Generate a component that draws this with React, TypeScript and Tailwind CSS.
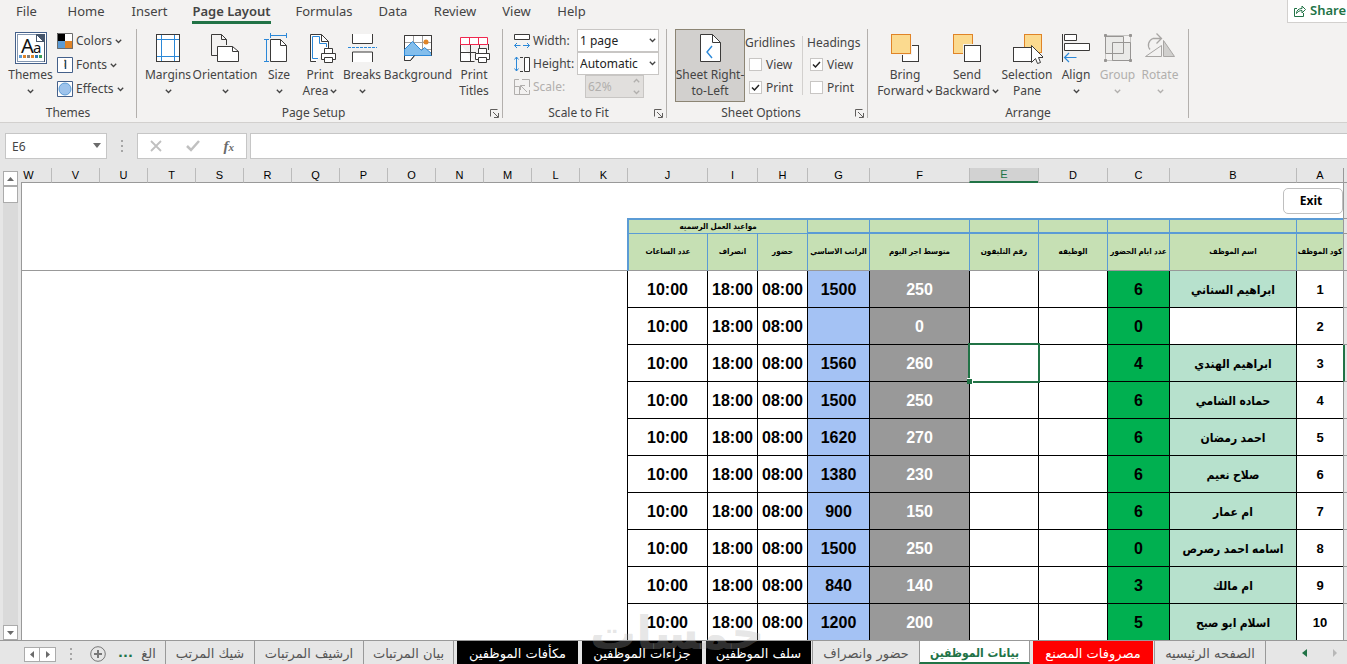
import React from "react";

type Kids = { children?: React.ReactNode };

const INK = "#3b3a39";
const BLUE = "#2b88d8";

function Chevron({ faded = false }: { faded?: boolean }) {
  return (
    <svg width="7" height="5" viewBox="0 0 7 5" fill="none" stroke={faded ? "#b1afad" : "#444"} strokeWidth="1.3" className="shrink-0">
      <path d="M0.8 0.8 3.5 3.5 6.2 0.8" />
    </svg>
  );
}

function Icon({ children, size = 32 }: Kids & { size?: number }) {
  return (
    <svg width={size} height={size} viewBox={`0 0 ${size} ${size}`} fill="none" stroke={INK} strokeWidth="1" className="shrink-0" aria-hidden="true">
      {children}
    </svg>
  );
}

const Printer = ({ x, y }: { x: number; y: number }) => (
  <g transform={`translate(${x} ${y})`} fill="#fff">
    <path d="M3.5 5.500v-5h8v5" />
    <path d="M0.500 5.500h14v6H0.500z" />
    <path d="M3.500 9.500h8v5h-8z" />
  </g>
);

const ThemesIcon = () => (
  <Icon>
    <rect x="0.500" y="0.500" width="31" height="31" fill="#fff" stroke="#44608a" />
    <rect x="2.500" y="2.500" width="27" height="27" stroke="#8497b0" />
    <path d="M21 2h9v28h-1V10h-8z" fill="#44546a" stroke="none" />
    <path d="M21.500 2.500v7h7z" fill="#fff" stroke="#44546a" />
    <text x="6" y="21" fontSize="20" fontFamily="Noto Sans, sans-serif" fill="#111" stroke="none">A</text>
    <text x="18" y="21" fontSize="15" fontFamily="Noto Sans, sans-serif" fill="#111" stroke="none">a</text>
    {["#5b9bd5", "#e08427", "#7f7f7f", "#e08427", "#2e75b6", "#3a9d54"].map((c, i) => (
      <rect key={i} x={4 + i * 4} y="23" width="3" height="3" fill={c} stroke="none" />
    ))}
  </Icon>
);

const MarginsIcon = () => (
  <Icon>
    <rect x="4.500" y="2.500" width="23" height="27" fill="#fff" />
    <path d="M9.500 3v26M22.500 3v26M5 7.500h22M5 24.500h22" stroke={BLUE} />
  </Icon>
);

const OrientationIcon = () => (
  <Icon>
    <path d="M8 23.500H2.500v-21h10l5 5V13M12.500 2.500v5h5" />
    <path d="M8.500 14.500h15l6 5v10h-21z" fill="#fff" />
    <path d="M23.500 14.500v5h6" />
  </Icon>
);

const SizeIcon = () => (
  <Icon>
    <path d="M7.500 3.500h16M7.500 1v5M23.500 1v5M3.500 7.500v22M1 7.500h5M1 29.500h5" stroke={BLUE} />
    <path d="M7.500 7.500h10l6 6v16h-16z" fill="#fff" />
    <path d="M17.500 7.500v6h6" />
  </Icon>
);

const PrintAreaIcon = () => (
  <Icon>
    <path d="M12 29.500H6.500v-27h11l7 7V16" fill="#fff" />
    <path d="M17.500 2.500v7h7" />
    <path d="M14 26.500H8.500v-22h7v7h7V15" stroke={BLUE} />
    <Printer x={17} y={16} />
  </Icon>
);

const BreaksIcon = () => (
  <Icon>
    <path d="M6.500 2v9.500h20V2M6.500 30v-10h20v10" fill="#fff" />
    <path d="M2 15.500h29" stroke={BLUE} strokeDasharray="3 1" />
  </Icon>
);

const BackgroundIcon = () => (
  <Icon>
    <path d="M2.500 3.500h27v20h-17l-4 5h-6z" fill="#fff" />
    <path d="M11.500 4v8M20.500 4v18M3 10.500h26M3 17.500h26" stroke="#a19f9d" />
    <circle cx="24" cy="10" r="2.500" fill="#e08427" stroke="none" />
    <path d="M2.500 23.500v-6l8-8 9 9 3-3 7 6v2z" fill="#83beec" stroke={BLUE} />
    <path d="M2.500 3.500h27v20M2.500 28.500h6l4-5" />
  </Icon>
);

const PrintTitlesIcon = () => (
  <Icon>
    <path d="M2.500 12v17.500h14M12.500 12v17M21.500 12v4M3 20.500h15M30.500 12v6" fill="#fff" />
    <path d="M2.500 5.500h27v7h-27zM11.500 6v6M20.500 6v6" stroke="#f0284f" fill="#fff" />
    <Printer x={17} y={16} />
  </Icon>
);

const SheetIcon = () => (
  <Icon>
    <path d="M6.500 2.500h12l8 8v19h-20z" fill="#fff" />
    <path d="M18.500 2.500v8h8" />
    <path d="m18 14-5 6 5 6" stroke={BLUE} strokeWidth="1.400" />
  </Icon>
);

const ForwardIcon = () => (
  <Icon>
    <rect x="13.500" y="13.500" width="16" height="16" fill="#fff" />
    <rect x="1" y="1" width="22" height="22" fill="#f3f2f1" stroke="none" />
    <rect x="2.500" y="2.500" width="19" height="19" fill="#fbda8f" stroke="#e08427" />
  </Icon>
);

const BackwardIcon = () => (
  <Icon>
    <rect x="2.500" y="2.500" width="19" height="19" fill="#fbda8f" stroke="#e08427" />
    <rect x="12" y="12" width="20" height="20" fill="#f3f2f1" stroke="none" />
    <rect x="13.500" y="13.500" width="16" height="16" fill="#fff" />
  </Icon>
);

const SelectionIcon = () => (
  <Icon>
    <rect x="13.500" y="2.500" width="17" height="18" fill="#fbda8f" stroke="#e08427" />
    <rect x="2.500" y="15.500" width="18" height="14" fill="#fff" />
    <path d="M20.500 13.500v17l4-4 2 5 3-1-2-5h5z" fill="#fff" />
  </Icon>
);

const AlignIcon = () => (
  <Icon>
    <path d="M2.500 2v28" />
    <path d="M4.500 2.500h12v6h-12zM4.500 11.500h25v7h-25z" fill="#fff" />
    <path d="M4.500 25.500h12M9 21l-4.500 4.500L9 30" stroke={BLUE} strokeWidth="1.200" />
  </Icon>
);

const GroupIcon = () => (
  <Icon>
    <g stroke="#979593">
      <path d="M5 3.500h22M3.500 5v22M28.500 5v22M5 28.500h22" strokeOpacity="0.500" />
      <path d="M3.500 4.500h18v17h-18zM10.500 10.500h18v18h-18z" fill="#d8d7d5" fillOpacity="0.300" />
      <path d="M2.500 2.500h2v2h-2zM27.500 2.500h2v2h-2zM2.500 27.500h2v2h-2zM27.500 27.500h2v2h-2z" fill="#979593" />
    </g>
  </Icon>
);

const RotateIcon = () => (
  <Icon>
    <g stroke="#a8a6a4">
      <path d="M6 17.500a7 7 0 0 1 3-11h8M12.500 1.500l5 5-5 5" strokeWidth="1.300" />
      <path d="M1.500 24.500 17.500 13.500v11z" fill="#f3f2f1" />
      <path d="M19.500 8.500v16h11z" fill="#d0cfcd" />
    </g>
  </Icon>
);

const menuTabs: [string, string][] = [
  ["File", "w-[53px]"],
  ["Home", "w-[66px]"],
  ["Insert", "w-[61px]"],
  ["Page Layout", "w-[103px]"],
  ["Formulas", "w-[82px]"],
  ["Data", "w-[56px]"],
  ["Review", "w-[68px]"],
  ["View", "w-[55px]"],
  ["Help", "w-[55px]"],
];

type BigProps = {
  icon: React.ReactNode;
  lines: [string, string?];
  width: string;
  menu?: boolean;
  faded?: boolean;
  active?: boolean;
};

function BigButton({ icon, lines, width, menu, faded, active }: BigProps) {
  return (
    <button
      type="button"
      disabled={faded}
      className={`flex h-[73px] shrink-0 flex-col items-center border pt-0.5 whitespace-nowrap ${width} ${
        faded ? "text-[#b1afad]" : ""
      } ${active ? "border-[#8c8574] bg-[#d2d0ce]" : "border-transparent"}`}
    >
      {icon}
      <span className="mt-[3px] leading-4">{lines[0]}</span>
      <span className="flex h-4 items-center gap-0.5 leading-4">
        {lines[1]}
        {menu && <Chevron faded={faded} />}
      </span>
    </button>
  );
}

function Group({ label, width, launcher, children }: Kids & { label: string; width: string; launcher?: boolean }) {
  return (
    <section className={`flex h-[89px] shrink-0 flex-col border-r border-[#b3b0ad] ${width}`} aria-label={label}>
      <div className="flex h-[76px] shrink-0 items-start">{children}</div>
      <div className="flex h-4 shrink-0 items-center">
        <span className="flex-1 text-center leading-4">{label}</span>
        {launcher && (
          <button type="button" aria-label={`${label} settings`} className="mr-[3px]">
            <svg width="9" height="9" viewBox="0 0 9 9" fill="none" stroke="#605e5c">
              <path d="M0.500 7.500v-7h7M3 3l5 5M8.500 4v4.500H4" />
            </svg>
          </button>
        )}
      </div>
    </section>
  );
}

function SmallItem({ icon, text }: { icon: React.ReactNode; text: string }) {
  return (
    <button type="button" className="flex h-6 items-center gap-[3px] whitespace-nowrap">
      {icon}
      {text}
      <Chevron />
    </button>
  );
}

function Check({ id, text, on }: { id: string; text: string; on?: boolean }) {
  return (
    <label htmlFor={id} className="flex h-[23px] items-center gap-1">
      <span className="relative flex size-[13px]">
        <input id={id} type="checkbox" defaultChecked={on} className="peer size-[13px] appearance-none border border-[#c8c6c4] bg-white" />
        <svg viewBox="0 0 13 13" fill="none" stroke="#222" strokeWidth="1.500" className="pointer-events-none absolute inset-0 hidden size-[13px] peer-checked:block">
          <path d="m3 6.500 2.500 2.500L10 4" />
        </svg>
      </span>
      {text}
    </label>
  );
}

function FitSelect({ id, value, options }: { id: string; value: string; options: string[] }) {
  return (
    <span className="relative flex">
      <select id={id} defaultValue={value} className="h-[23px] w-[82px] appearance-none border border-[#c8c6c4] bg-white pl-0.5 text-[#222]">
        {options.map((o) => (
          <option key={o}>{o}</option>
        ))}
      </select>
      <span className="pointer-events-none absolute top-[9px] right-[3px]">
        <Chevron />
      </span>
    </span>
  );
}

function Ribbon() {
  return (
    <div className="flex h-[99px] border-b border-[#d2d0ce] pt-[5px]">
      <Group label="Themes" width="w-[137px]">
        <div className="w-1" />
        <BigButton icon={<ThemesIcon />} lines={["Themes"]} width="w-[53px]" menu />
        <div className="flex flex-col">
          <SmallItem
            text="Colors"
            icon={
              <Icon size={16}>
                <path d="M0 0h8v8H0z" fill="#000" stroke="none" />
                <path d="M8 0h8v8H8z" fill="#fff" stroke="none" />
                <path d="M0 8h8v8H0z" fill="#5b9bd5" stroke="none" />
                <path d="M8 8h8v8H8z" fill="#e08427" stroke="none" />
                <path d="M0.500 0.500h15v15h-15z" stroke="#6b6b6b" />
              </Icon>
            }
          />
          <SmallItem
            text="Fonts"
            icon={
              <Icon size={16}>
                <path d="M0.500 0.500h15v15h-15z" fill="#fff" stroke="#44608a" />
                <path d="M7 3.500h2" stroke="#e08427" strokeWidth="1.500" />
                <path d="M8.500 3v9" stroke="#1f4e79" strokeWidth="1.500" />
                <path d="M7.500 6v4" stroke="#e8b070" />
              </Icon>
            }
          />
          <SmallItem
            text="Effects"
            icon={
              <Icon size={16}>
                <path d="M0.500 0.500h15v15h-15z" fill="#fff" stroke="#44608a" />
                <circle cx="8" cy="8" r="6" fill="#9dc3ec" stroke="#5b9bd5" />
              </Icon>
            }
          />
        </div>
      </Group>

      <Group label="Page Setup" width="w-[366px]" launcher>
        <div className="w-[5px]" />
        <BigButton icon={<MarginsIcon />} lines={["Margins"]} width="w-[52px]" menu />
        <BigButton icon={<OrientationIcon />} lines={["Orientation"]} width="w-[62px]" menu />
        <BigButton icon={<SizeIcon />} lines={["Size"]} width="w-[46px]" menu />
        <BigButton icon={<PrintAreaIcon />} lines={["Print", "Area"]} width="w-[36px]" menu />
        <BigButton icon={<BreaksIcon />} lines={["Breaks"]} width="w-[48px]" menu />
        <BigButton icon={<BackgroundIcon />} lines={["Background"]} width="w-[64px]" />
        <BigButton icon={<PrintTitlesIcon />} lines={["Print", "Titles"]} width="w-[48px]" />
      </Group>

      <Group label="Scale to Fit" width="w-[164px]" launcher>
        <div className="grid grid-cols-[19px_44px_auto] items-center pl-[11px]">
          <Icon size={16}>
            <path d="M0.500 1.500h15v5h-15z" fill="#fff" />
            <path d="M0.500 12.500h6M9 12.500h6.500M3 10l-2.500 2.500L3 15M13 10l2.500 2.500L13 15" stroke={BLUE} />
          </Icon>
          <label htmlFor="fit-width">Width:</label>
          <FitSelect id="fit-width" value="1 page" options={["Automatic", "1 page", "2 pages"]} />
          <Icon size={16}>
            <path d="M10.500 1.500h5v14h-5z" fill="#fff" />
            <path d="M6 1.500h3M6 15.500h3" />
            <path d="M2.500 1v14M0.500 3.500l2-2.500 2 2.500M0.500 12.500l2 2.500 2-2.500" stroke={BLUE} />
          </Icon>
          <label htmlFor="fit-height">Height:</label>
          <FitSelect id="fit-height" value="Automatic" options={["Automatic", "1 page", "2 pages"]} />
          <Icon size={16}>
            <g stroke="#b1afad">
              <path d="M5 0.500H0.500v15h15V11M8 0.500h7.500V8M0.500 7.500h5v8M13 13 6.500 6.500M6.500 11V6.500H11" />
            </g>
          </Icon>
          <label htmlFor="fit-scale" className="text-[#b1afad]">Scale:</label>
          <span className="relative ml-2 flex h-[23px] w-[59px]">
            <input id="fit-scale" disabled defaultValue="62%" className="h-[23px] w-full border border-[#c8c6c4] bg-[#e1dfdd] pl-0.5 text-[#b1afad]" />
            <span className="absolute top-[3px] right-1 flex flex-col gap-[7px]">
              <span className="flex rotate-180"><Chevron faded /></span>
              <Chevron faded />
            </span>
          </span>
        </div>
      </Group>

      <Group label="Sheet Options" width="w-[201px]" launcher>
        <div className="w-2" />
        <BigButton icon={<SheetIcon />} lines={["Sheet Right-", "to-Left"]} width="w-[70px]" active />
        <div className="flex w-[57px] flex-col">
          <span className="mt-1 flex h-5 items-center">Gridlines</span>
          <div className="pl-1">
            <Check id="grid-view" text="View" />
            <Check id="grid-print" text="Print" on />
          </div>
        </div>
        <div className="mt-[7px] h-[59px] border-l border-[#d2d0ce]" />
        <div className="flex flex-col pl-1">
          <span className="mt-1 flex h-5 items-center">Headings</span>
          <div className="pl-[3px]">
            <Check id="head-view" text="View" on />
            <Check id="head-print" text="Print" />
          </div>
        </div>
      </Group>

      <Group label="Arrange" width="w-[321px]">
        <div className="w-2" />
        <BigButton icon={<ForwardIcon />} lines={["Bring", "Forward"]} width="w-[58px]" menu />
        <BigButton icon={<BackwardIcon />} lines={["Send", "Backward"]} width="w-[66px]" menu />
        <BigButton icon={<SelectionIcon />} lines={["Selection", "Pane"]} width="w-[54px]" />
        <BigButton icon={<AlignIcon />} lines={["Align"]} width="w-[44px]" menu />
        <BigButton icon={<GroupIcon />} lines={["Group"]} width="w-[39px]" menu faded />
        <BigButton icon={<RotateIcon />} lines={["Rotate"]} width="w-[46px]" menu faded />
      </Group>
    </div>
  );
}

function Dots() {
  return (
    <svg width="2" height="12" viewBox="0 0 2 12" fill="#a6a6a6" className="shrink-0">
      <path d="M0 0h2v2H0zM0 5h2v2H0zM0 10h2v2H0z" />
    </svg>
  );
}

function FormulaBar() {
  return (
    <div className="flex items-center pt-[10px] pb-[9px] pl-[5px]">
      <label className="relative flex">
        <input aria-label="Name box" defaultValue="E6" className="h-[26px] w-[102px] border border-[#c6c6c6] bg-white pl-1.5 text-[#444]" />
        <svg width="8" height="5" viewBox="0 0 8 5" fill="#6b6b6b" className="absolute top-[10px] right-1.5">
          <path d="M0 0h8L4 5z" />
        </svg>
      </label>
      <div className="flex w-[30px] justify-center"><Dots /></div>
      <div className="flex h-[26px] w-[110px] items-center justify-around border border-[#c6c6c6] bg-white">
        <button type="button" aria-label="Cancel">
          <svg width="12" height="12" viewBox="0 0 12 12" stroke="#c0c0c0" strokeWidth="1.800"><path d="m1 1 10 10M11 1 1 11" /></svg>
        </button>
        <button type="button" aria-label="Enter">
          <svg width="14" height="12" viewBox="0 0 14 12" fill="none" stroke="#c0c0c0" strokeWidth="2.500"><path d="m1 6 4 4 8-9" /></svg>
        </button>
        <button type="button" aria-label="Insert function" className="font-['Liberation_Serif',serif] text-[15px] leading-4 font-bold text-[#6b6b6b] italic">
          f<span className="text-[11px]">x</span>
        </button>
      </div>
      <input aria-label="Formula" className="ml-[3px] h-[26px] min-w-0 flex-1 border border-r-0 border-[#c6c6c6] bg-white px-2" />
    </div>
  );
}

type Row = { days: string; name: string; avg: string; pay: string };

const rows: Row[] = [
  { days: "6", name: "ابراهيم السناني", avg: "250", pay: "1500" },
  { days: "0", name: "", avg: "0", pay: "" },
  { days: "4", name: "ابراهيم الهندي", avg: "260", pay: "1560" },
  { days: "6", name: "حماده الشامي", avg: "250", pay: "1500" },
  { days: "6", name: "احمد رمضان", avg: "270", pay: "1620" },
  { days: "6", name: "صلاح نعيم", avg: "230", pay: "1380" },
  { days: "6", name: "ام عمار", avg: "150", pay: "900" },
  { days: "0", name: "اسامه احمد رصرص", avg: "250", pay: "1500" },
  { days: "3", name: "ام مالك", avg: "140", pay: "840" },
  { days: "5", name: "اسلام ابو صبح", avg: "200", pay: "1200" },
];

const heads = [
  "كود الموظف",
  "اسم الموظف",
  "عدد ايام الحضور",
  "الوظيفه",
  "رقم التليفون",
  "متوسط اجر اليوم",
  "الراتب الاساسي",
  "حضور",
  "انصراف",
  "عدد الساعات",
];

const letters = "ABCDEFGHIJKLMNOPQRSTUVW".split("");

const colWidths = [
  "w-[47px]", "w-[127px]", "w-[62px]", "w-[69px]", "w-[69px]", "w-[100px]",
  "w-[62px]", "w-[50px]", "w-[50px]", "w-[80px]",
];

const cell = "border-b border-l border-black p-0 pt-0.5 text-center";

function Sheet() {
  return (
    <div className="flex min-h-0 flex-1 overflow-hidden">
      <div className="flex w-[21px] shrink-0 flex-col pt-[3px] pl-[3px]">
        <button type="button" aria-label="Scroll up" className="flex h-[15px] w-[15px] items-center justify-center border border-[#ababab] bg-white">
          <svg width="7" height="4" viewBox="0 0 7 4" fill="#6b6b6b"><path d="M0 4h7L3.500 0z" /></svg>
        </button>
        <div className="w-[15px] flex-1 bg-[#dadada]">
          <div className="h-[17px] border border-[#ababab] bg-white" />
        </div>
        <button type="button" aria-label="Scroll down" className="flex h-[15px] w-[15px] items-center justify-center border border-[#ababab] bg-white">
          <svg width="7" height="4" viewBox="0 0 7 4" fill="#6b6b6b"><path d="M0 0h7L3.500 4z" /></svg>
        </button>
      </div>
      <div className="relative min-w-0 flex-1 overflow-hidden">
        <table dir="rtl" className="w-full table-fixed border-separate border-spacing-0 font-['Liberation_Sans','DejaVu_Sans_Condensed','DejaVu_Sans',sans-serif] text-black">
          <colgroup>
            <col className="w-1" />
            {colWidths.map((w, i) => (
              <col key={i} className={w} />
            ))}
            {letters.slice(10, 22).map((l) => (
              <col key={l} className="w-[48px]" />
            ))}
            <col />
          </colgroup>
          <thead>
            <tr className="h-[15px] text-[11px] leading-[13px]">
              <td className="border-b border-l border-[#999] p-0" />
              {letters.map((l) => (
                <th
                  key={l}
                  scope="col"
                  className={`p-0 font-normal ${
                    l === "E"
                      ? "border-b-2 border-l border-b-[#217346] border-l-[#bbb] bg-[#d2d2d2] text-[#217346]"
                      : l === "W"
                        ? "border-b border-[#999] pr-[15px]"
                        : "border-b border-l border-b-[#999] border-l-[#bbb]"
                  }`}
                >
                  {l}
                </th>
              ))}
            </tr>
          </thead>
          <tbody>
            <tr className="h-[35px]">
              <td className="border-l border-[#999] p-0" />
              <td colSpan={23} className="border-l border-[#999] bg-white p-0" />
            </tr>
            <tr className="h-4 text-[8px] leading-[12px] font-bold">
              <td className="border-y border-l border-[#999] p-0" />
              {heads.slice(0, 7).map((h) => (
                <td key={h} className="border-y-2 border-l border-[#5b9bd5] bg-[#c6e0b4] p-0" />
              ))}
              <td colSpan={3} className="border-t-2 border-b border-l-2 border-[#5b9bd5] bg-[#c6e0b4] p-0 text-center">
                مواعيد العمل الرسميه
              </td>
              <td colSpan={13} className="border-l border-[#999] bg-white p-0" />
            </tr>
            <tr className="h-[37px] text-[8px] font-bold">
              <td className="border-b border-l border-[#999] p-0" />
              {heads.map((h, i) => (
                <th
                  key={h}
                  scope="col"
                  className={`border-b border-[#5b9bd5] border-b-[#999] bg-[#c6e0b4] p-0 whitespace-nowrap ${i === 9 ? "border-l-2" : "border-l"}`}
                >
                  {h}
                </th>
              ))}
              <td colSpan={13} className="border-b border-l border-[#999] bg-white p-0" />
            </tr>
            {rows.map((r, i) => (
              <tr key={i} className="h-[37px] text-[16px] leading-5 font-bold">
                <td className={`border-b border-b-[#999] p-0 ${i === 2 ? "border-l-2 border-l-[#217346]" : "border-l border-l-[#999]"}`} />
                <td className={`${cell} bg-white text-[13px]`}>{i + 1}</td>
                <td className={`${cell} text-[12px] ${r.name ? "bg-[#b7e1cd]" : "bg-white"}`}>{r.name}</td>
                <td className={`${cell} bg-[#00b050]`}>{r.days}</td>
                <td className={`${cell} bg-white`} />
                <td className={`${cell} relative bg-white`}>
                  {i === 2 && (
                    <span className="absolute -inset-x-[2px] -top-[2px] -bottom-[2px] z-10 border-2 border-[#217346]">
                      <span className="absolute -bottom-[3px] -left-[3px] size-[6px] border-t border-r border-white bg-[#217346]" />
                    </span>
                  )}
                </td>
                <td className={`${cell} bg-[#999] text-white`}>{r.avg}</td>
                <td className={`${cell} bg-[#a4c2f4]`}>{r.pay}</td>
                <td className={`${cell} bg-white`}>08:00</td>
                <td className={`${cell} bg-white`}>18:00</td>
                <td className={`${cell} bg-white`}>10:00</td>
                <td colSpan={13} className="border-l border-[#999] bg-white p-0" />
              </tr>
            ))}
          </tbody>
        </table>
        <button
          type="button"
          className="absolute top-5 right-1 h-[26px] w-[60px] rounded-[5px] border border-[#bfbfbf] bg-white pr-1 font-['Open_Sans',sans-serif] text-[12px] font-bold text-black"
        >
          Exit
        </button>
      </div>
    </div>
  );
}

const sheetTabs: { name: string; look: string }[] = [
  { name: "الغ", look: "w-[34px] border-r border-[#999] text-[#555]" },
  { name: "شيك المرتب", look: "w-[89px] border-r border-[#999] text-[#555]" },
  { name: "ارشيف المرتبات", look: "w-[109px] border-r border-[#999] text-[#555]" },
  { name: "بيان المرتبات", look: "w-[90px] border-r border-[#999] text-[#555]" },
  { name: "مكأفات الموظفين", look: "ml-[3px] w-[121px] bg-black text-white" },
  { name: "جزاءات الموظفين", look: "ml-1 w-[120px] bg-black text-white" },
  { name: "سلف الموظفين", look: "ml-1 w-[105px] bg-black text-white" },
  { name: "حضور وانصراف", look: "ml-[1px] w-[107px] border-l border-[#999] text-[#555]" },
  {
    name: "بيانات الموظفين",
    look: "w-[111px] border-x border-b-2 border-x-[#999] border-b-[#217346] bg-white font-['DejaVu_Sans_Condensed','DejaVu_Sans',sans-serif] text-[12px] font-bold text-[#217346]",
  },
  { name: "مصروفات المصنع", look: "ml-[3px] w-[120px] bg-[#f00] text-white" },
  { name: "الصفحه الرئيسيه", look: "ml-[1px] w-[112px] border-x border-[#999] text-[#555]" },
];

function SheetTabs() {
  return (
    <nav className="flex h-6 shrink-0 border-t border-[#999] font-['DejaVu_Sans',sans-serif] text-[13px]" aria-label="Sheets">
      <div className="flex w-[119px] shrink-0 items-center pt-[3px] pl-6">
        <button type="button" aria-label="Previous" className="flex h-[15px] w-4 items-center justify-center border border-[#ababab] bg-white">
          <svg width="4" height="7" viewBox="0 0 4 7" fill="#6b6b6b"><path d="M4 0v7L0 3.500z" /></svg>
        </button>
        <button type="button" aria-label="Next" className="flex h-[15px] w-4 items-center justify-center border border-l-0 border-[#ababab] bg-white">
          <svg width="4" height="7" viewBox="0 0 4 7" fill="#6b6b6b"><path d="M0 0v7l4-3.500z" /></svg>
        </button>
        <div className="flex w-[30px] justify-center"><Dots /></div>
        <button type="button" aria-label="New sheet" className="ml-1">
          <svg width="16" height="16" viewBox="0 0 16 16" fill="none" stroke="#777">
            <circle cx="8" cy="8" r="7.300" />
            <path d="M8 4v8M4 8h8" strokeWidth="2" />
          </svg>
        </button>
      </div>
      <span className="flex w-[13px] items-center justify-center font-bold text-[#217346]">...</span>
      {sheetTabs.map((t) => (
        <button key={t.name} type="button" className={`flex shrink-0 items-center justify-center overflow-hidden pt-0.5 whitespace-nowrap ${t.look}`}>
          {t.name}
        </button>
      ))}
      <div className="flex flex-1 items-center justify-end gap-[26px] pr-[10px]">
        <svg width="5" height="8" viewBox="0 0 5 8" fill="#217346"><path d="M5 0v8L0 4z" /></svg>
        <svg width="4" height="8" viewBox="0 0 4 8" fill="#b8b8b8"><path d="M0 0v8l4-4z" /></svg>
      </div>
    </nav>
  );
}

export default function App() {
  return (
    <div className="relative flex h-screen flex-col overflow-hidden bg-[#e6e6e6] font-['Noto_Sans',sans-serif] text-[12px] text-[#444]">
      <header className="shrink-0 bg-[#f3f2f1]">
        <div className="flex h-6 text-[13px]">
          {menuTabs.map(([name, width]) => (
            <button key={name} type="button" className={`flex h-6 shrink-0 items-end justify-center whitespace-nowrap ${width}`}>
              <span className={`flex h-6 items-center border-b-[3px] pt-0.5 ${name === "Page Layout" ? "border-[#217346] font-semibold" : "border-transparent"}`}>
                {name}
              </span>
            </button>
          ))}
          <div className="flex-1" />
          <button type="button" className="flex h-[23px] w-[60px] shrink-0 items-center gap-1 border-b border-l border-[#d2d0ce] bg-white pl-1.5 font-semibold text-[#217346]">
            <svg width="12" height="12" viewBox="0 0 12 12" fill="none" stroke="#217346" className="shrink-0">
              <path d="M3 3.500H0.500v8h9V8M2.500 8.500c0-3 2-5 5.500-5V1l3.500 3.500L8 8V5.500c-2.500 0-4 1-5.500 3z" />
            </svg>
            Share
          </button>
        </div>
        <Ribbon />
      </header>
      <FormulaBar />
      <Sheet />
      <SheetTabs />
      <div className="pointer-events-none absolute bottom-2 left-[590px] font-['DejaVu_Sans',sans-serif] text-[46px] leading-[46px] font-bold text-[#aaa]/30" dir="rtl">
        خمسات
      </div>
    </div>
  );
}
